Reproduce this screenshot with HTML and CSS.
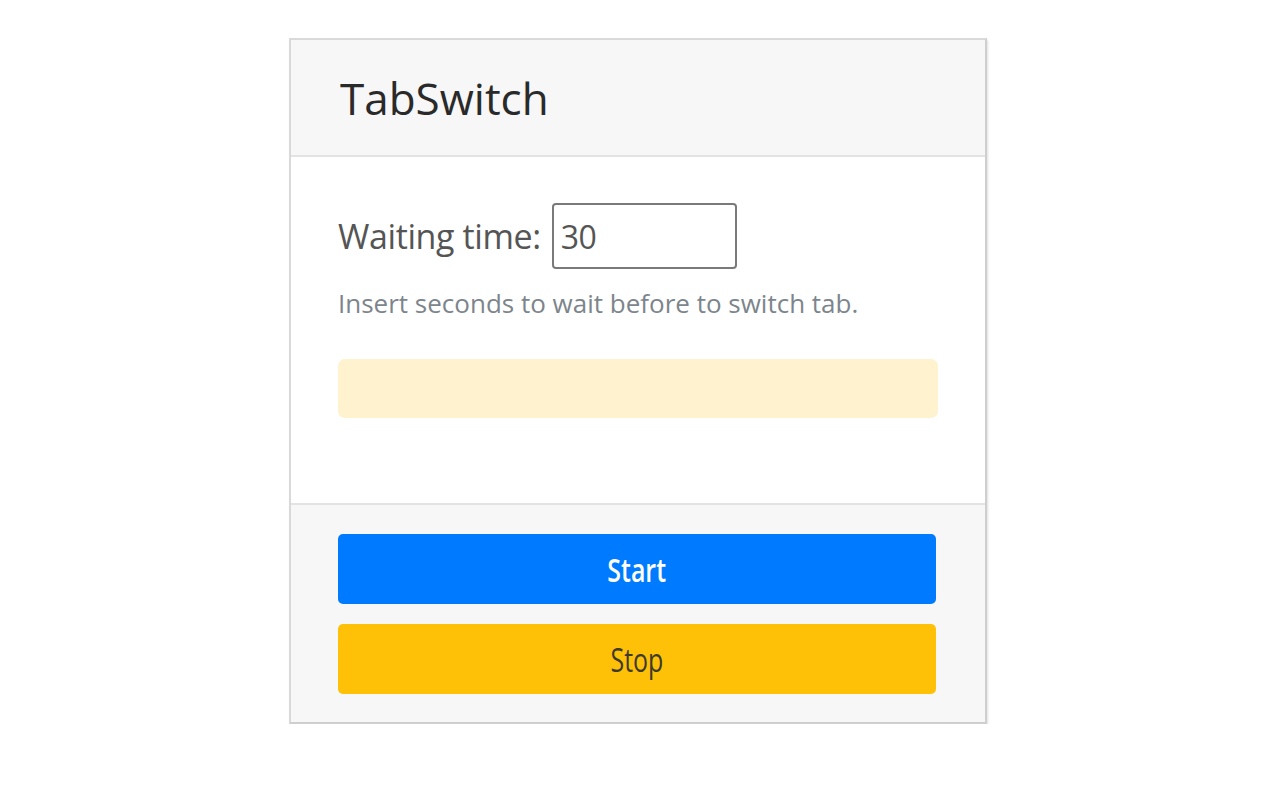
FILE: index.html
```html
<!DOCTYPE html>
<html>
<head>
<meta charset="utf-8">
<title>TabSwitch</title>
<link rel="stylesheet" href="styles.css">
</head>
<body>
<div class="card">
  <div class="card-header">
    <h4 class="title">TabSwitch</h4>
  </div>
  <div class="card-body">
    <div class="field">
      <label class="label" for="wait">Waiting time:</label>
      <input class="input" id="wait" type="text" value="30">
    </div>
    <p class="help">Insert seconds to wait before to switch tab.</p>
    <div class="alert"></div>
  </div>
  <div class="card-footer">
    <button class="btn btn-start"><span>Start</span></button>
    <button class="btn btn-stop"><span>Stop</span></button>
  </div>
</div>
</body>
</html>
```
FILE: styles.css
```css
html, body {
  margin: 0;
  padding: 0;
  background: #ffffff;
}
body {
  font-family: "Open Sans", "Noto Sans", sans-serif;
  color: #212529;
  padding-top: 38px;
  padding-left: 289px;
}
.card {
  width: 694px;
  border: 2px solid #d9d9d9;
  border-right-color: #cfcfcf;
  border-bottom-color: #cfcfcf;
  box-shadow: 1px 2px 2px rgba(0,0,0,0.12);
  display: flex;
  flex-direction: column;
  background: #fff;
}
.card-header {
  background: #f7f7f7;
  height: 115px;
  border-bottom: 2px solid #e3e3e3;
  display: flex;
  align-items: center;
  padding: 0 47px 0 49px;
}
.title {
  margin: 0;
  font-size: 44px;
  font-weight: 400;
  color: #2a2a2a;
  letter-spacing: 0;
}
.card-body {
  padding: 46px 47px 84px 47px;
  height: 216px;
}
.field {
  display: flex;
  align-items: center;
  gap: 11px;
}
.label {
  font-size: 34px;
  color: #555;
  letter-spacing: -0.4px;
}
.input {
  width: 185px;
  height: 66px;
  box-sizing: border-box;
  border: 2px solid #7a7a7a;
  border-radius: 4px;
  font-family: inherit;
  font-size: 32px;
  color: #555;
  padding: 0 7px;
  letter-spacing: -0.5px;
}
.help {
  margin: 16px 0 0 0;
  font-size: 26px;
  color: #7d858c;
  letter-spacing: 0;
}
.alert {
  margin-top: 38px;
  height: 59px;
  background: #fef2cf;
  border-radius: 7px;
}
.card-footer {
  background: #f7f7f7;
  border-top: 2px solid #e3e3e3;
  padding: 29px 49px 28px 47px;
  display: flex;
  flex-direction: column;
  gap: 20px;
}
.btn {
  height: 70px;
  border: none;
  border-radius: 5px;
  font-family: inherit;
  font-size: 32px;
  cursor: pointer;
  display: flex;
  align-items: center;
  justify-content: center;
}
.btn span {
  display: inline-block;
  transform: scaleX(0.78);
}
.btn-start {
  background: #007bff;
  color: #fff;
  font-weight: 600;
}
.btn-stop {
  background: #ffc107;
  color: #3d3a2e;
}
```
